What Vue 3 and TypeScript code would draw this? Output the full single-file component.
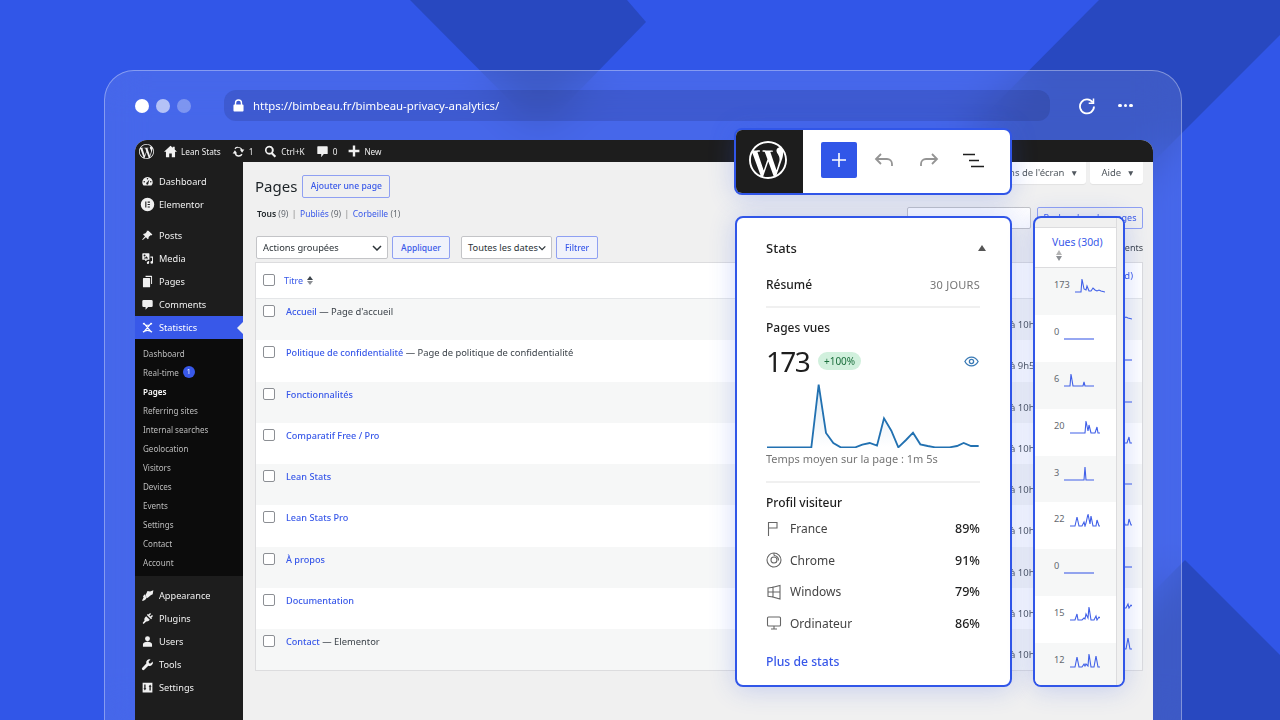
<script setup lang="ts">
interface MenuItem {
  label: string;
  d: string;
  big?: boolean;
}

const wpLogo =
  'M21.469 6.825c.84 1.537 1.318 3.3 1.318 5.175 0 3.979-2.156 7.456-5.363 9.325l3.295-9.527c.615-1.54.82-2.771.82-3.864 0-.405-.026-.78-.07-1.11m-7.981.105c.647-.03 1.232-.105 1.232-.105.582-.075.514-.93-.067-.899 0 0-1.755.135-2.88.135-1.064 0-2.85-.15-2.85-.15-.585-.03-.661.855-.075.885 0 0 .54.061 1.125.09l1.68 4.605-2.37 7.08L5.354 6.9c.649-.03 1.234-.1 1.234-.1.585-.075.516-.93-.065-.896 0 0-1.746.138-2.874.138-.2 0-.438-.008-.69-.015C4.911 3.15 8.235 1.215 12 1.215c2.809 0 5.365 1.072 7.286 2.833-.046-.003-.091-.009-.141-.009-1.06 0-1.812.923-1.812 1.914 0 .89.513 1.643 1.06 2.531.411.72.89 1.643.89 2.977 0 .915-.354 1.994-.821 3.479l-1.075 3.585-3.9-11.61.001.014zM12 22.784c-1.059 0-2.081-.153-3.048-.437l3.237-9.406 3.315 9.087c.024.053.05.101.078.149-1.12.393-2.325.609-3.582.609M1.211 12c0-1.564.336-3.05.935-4.39L7.29 21.709C3.694 19.96 1.212 16.271 1.211 12M12 0C5.385 0 0 5.385 0 12s5.385 12 12 12 12-5.385 12-12S18.615 0 12 0';

const topMenu: MenuItem[] = [
  { label: 'Dashboard', d: 'M10 3a8 8 0 0 0-8 8c0 2 .7 3.7 2 5h12c1.3-1.3 2-3 2-5a8 8 0 0 0-8-8zm0 1.5a1.2 1.2 0 1 1 0 2.4 1.2 1.2 0 0 1 0-2.4zM5 11.5a1.2 1.2 0 1 1 0-2.4 1.2 1.2 0 0 1 0 2.4zm10 0a1.2 1.2 0 1 1 0-2.4 1.2 1.2 0 0 1 0 2.4zM10 15a2 2 0 0 1-.6-3.9L13 7l-1.6 5.4A2 2 0 0 1 10 15z' },
  { label: 'Elementor', big: true, d: 'M10 1a9 9 0 1 0 0 18 9 9 0 0 0 0-18zM7 6h1.5v8H7V6zm3.2 0h3v1.5h-3V6zm0 3.2h3v1.5h-3V9.2zm0 3.3h3V14h-3v-1.5z' },
];
const contentMenu: MenuItem[] = [
  { label: 'Posts', d: 'M11.4 2.5l6.1 6.1-1.5 1.4c-.7-.4-1.5-.3-2.1.2l-1.8 1.8c-.6.6-.7 1.5-.2 2.2l-1.4 1.4-3-3-4.8 4.4-.9-.9 4.4-4.8-3-3 1.4-1.4c.7.4 1.6.3 2.2-.3l1.8-1.8c.5-.6.6-1.4.2-2.1z' },
  { label: 'Media', d: 'M3 2h9a1 1 0 0 1 1 1v8a1 1 0 0 1-1 1H8.5v2h-2v-2H3a1 1 0 0 1-1-1V3a1 1 0 0 1 1-1zm2.5 2a1.5 1.5 0 1 0 0 3 1.5 1.5 0 0 0 0-3zM4 10h7L8.5 6.5 7 8.5 6 8zM18.5 7v9a2 2 0 1 1-1.5-1.9V9h-2.500V7zM12.5 14v2.5a1.8 1.8 0 1 1-1.5-1.7V14z' },
  { label: 'Pages', d: 'M7 1h9a1 1 0 0 1 1 1v12h-1.5V3H7V1zM4 4.5h9a1 1 0 0 1 1 1V18a1 1 0 0 1-1 1H4a1 1 0 0 1-1-1V5.5a1 1 0 0 1 1-1z' },
  { label: 'Comments', d: 'M4 3h12a2 2 0 0 1 2 2v7a2 2 0 0 1-2 2h-5l-4 4v-4H4a2 2 0 0 1-2-2V5a2 2 0 0 1 2-2z' },
];
const bottomMenu: MenuItem[] = [
  { label: 'Appearance', d: 'M10 3l4 1 5-2-1 6-3 1.5L10 14 6.5 10.5zM6 8l-3 3 1 1.5L1.500 18c2.500 0 5.500-1 6.500-3.500l1-1.500z' },
  { label: 'Plugins', d: 'M14 1.5L15.5 3 13 5.500 14.500 7 17 4.500 18.500 6 16 8.500l1 1-1.500 1.500-6.500-6.500L10.500 3l1 1zM8 6.500l5.500 5.500c-1.500 2-3.500 3-5.500 2.500l-4 4L2.500 17l3-4C4.500 11 5.500 8 8 6.500z' },
  { label: 'Users', d: 'M10 2a3.8 3.8 0 1 1 0 7.6A3.8 3.8 0 0 1 10 2zM3 18v-3.5c0-2.5 3-4 7-4s7 1.5 7 4V18z' },
  { label: 'Tools', d: 'M18 5.5l-3.200 3-2.500-.6-.6-2.500 3-3.200a5 5 0 0 0-6.500 6.300L2 15a2.100 2.100 0 0 0 3 3l6.200-6.200A5 5 0 0 0 18 5.500z' },
  { label: 'Settings', d: 'M2.500 2.500h15v15h-15zM5 5.500v5.500H3.800L6 14.500 8.200 11H7V5.500zM13 14.500V9h-1.200L14 5.500 16.200 9H15v5.500z' },
];

const subMenu = [
  'Dashboard', 'Real-time', 'Pages', 'Referring sites', 'Internal searches', 'Geolocation',
  'Visitors', 'Devices', 'Events', 'Settings', 'Contact', 'Account',
];

const flat = '0,14 30,14';

interface PageRow {
  title: string;
  note?: string;
  time: string;
  views: number;
  spark: string;
}

const rows: PageRow[] = [
  { title: 'Accueil', note: "Page d'accueil", time: '10h', views: 173, spark: '0,14 6,14 7,1 9,11 11,12 12,8 14,13 16,13 18,10 20,12 22,13 24,12 26,13 30,14' },
  { title: 'Politique de confidentialité', note: 'Page de politique de confidentialité', time: '9h5', views: 0, spark: flat },
  { title: 'Fonctionnalités', time: '10h', views: 6, spark: '0,14 6,14 7,2 9,14 19,14 20,10 21,14 30,14' },
  { title: 'Comparatif Free / Pro', time: '10h', views: 20, spark: '0,14 15,14 16,2 18,12 19,6 21,14 25,14 27,8 28,14 30,14' },
  { title: 'Lean Stats', time: '10h', views: 3, spark: '0,14 20,14 21,1 22,14 30,14' },
  { title: 'Lean Stats Pro', time: '10h', views: 22, spark: '0,14 5,14 7,5 9,14 12,14 14,10 15,14 16,11 18,2 20,12 21,4 23,14 26,14 27,8 29,14 30,14' },
  { title: 'À propos', time: '10h', views: 0, spark: flat },
  { title: 'Documentation', time: '10h', views: 15, spark: '0,14 5,14 7,8 8,14 12,14 14,12 15,13 16,8 18,12 19,1 21,14 24,14 26,10 27,14 29,11 30,12' },
  { title: 'Contact', note: 'Elementor', time: '10h', views: 12, spark: '0,14 5,14 7,4 9,14 12,14 14,11 15,13 16,11 18,13 19,1 21,14 24,14 26,3 28,14 30,14' },
];

// Pixel samples of the views chart, 7.33px apart once drawn
const chartPoints =
  '110,710 243,710 265,522 287,667 309,697 331,710 375,710 396,702 418,697 440,705 461,623 483,660 504,710 527,688 548,666 570,701 592,706 614,710 658,710 680,706 700,697 722,706 745,706';
const chartArea = `110,710 ${chartPoints} 745,710`;

const profile = [
  { label: 'France', value: '89%', icon: 'flag' },
  { label: 'Chrome', value: '91%', icon: 'chrome' },
  { label: 'Windows', value: '79%', icon: 'windows' },
  { label: 'Ordinateur', value: '86%', icon: 'monitor' },
];
</script>

<template>
  <div class="page">
    <svg class="bg-shapes" width="1280" height="720" viewBox="0 0 1280 720">
      <polygon points="410,0 627,0 646,22 540,131" />
      <polygon points="1099,0 1280,0 1280,35 1067,248 960,140" />
      <polygon points="1185,560 1280,655 1280,720 1025,720" />
    </svg>

    <div class="browser">
      <div class="browser-bar">
        <div class="dots">
          <span class="dot"></span>
          <span class="dot dot-mid"></span>
          <span class="dot dot-low"></span>
        </div>
        <div class="url">
          <svg width="11" height="13" viewBox="0 0 12 14" fill="#fff">
            <path d="M2 6V4.2a4 4 0 0 1 8 0V6h.5a1 1 0 0 1 1 1v5.5a1 1 0 0 1-1 1h-9a1 1 0 0 1-1-1V7a1 1 0 0 1 1-1zm1.5 0h5V4.2a2.5 2.5 0 0 0-5 0z" />
          </svg>
          <span>https://bimbeau.fr/bimbeau-privacy-analytics/</span>
        </div>
        <svg class="reload" width="18" height="18" viewBox="0 0 18 18" fill="none" stroke="#fff" stroke-width="1.8">
          <path d="M14.8 5.5A7 7 0 1 0 16 9.5" />
          <path d="M15.5 1.5v4.8h-4.8" stroke-width="1.5" />
        </svg>
        <div class="more"><i></i><i></i><i></i></div>
      </div>

      <div class="screen">
        <div class="wp-topbar">
          <svg class="wp-mark" width="15" height="15" viewBox="0 0 24 24"><path :d="wpLogo" /></svg>
          <span class="tb-item">
            <svg width="13" height="13" viewBox="0 0 20 20"><path d="M10 1L0 10.5h3V19h5v-6h4v6h5v-8.5h3L16.5 7V2.5h-3v1.700z" /></svg>
            Lean Stats
          </span>
          <span class="tb-item">
            <svg width="13" height="13" viewBox="0 0 20 20"><path d="M10 3a7 7 0 0 1 6.3 4H19l-3.500 5L12 7h2a5 5 0 0 0-8.600-.5L3.800 5A7 7 0 0 1 10 3zM4.500 8L8 13H6a5 5 0 0 0 8.600.5L16.200 15A7 7 0 0 1 3.700 13H1z" /></svg>
            1
          </span>
          <span class="tb-item">
            <svg width="13" height="13" viewBox="0 0 20 20"><path d="M8 1a7 7 0 0 1 5.700 11l5 5-2.400 2.400-5-5A7 7 0 1 1 8 1zm0 3a4 4 0 1 0 0 8 4 4 0 0 0 0-8z" fill-rule="evenodd" /></svg>
            Ctrl+K
          </span>
          <span class="tb-item">
            <svg width="13" height="13" viewBox="0 0 20 20"><path d="M3 2h14a1 1 0 0 1 1 1v10a1 1 0 0 1-1 1h-5l-4 5v-5H3a1 1 0 0 1-1-1V3a1 1 0 0 1 1-1z" /></svg>
            0
          </span>
          <span class="tb-item">
            <svg width="12" height="12" viewBox="0 0 20 20"><path d="M8 1h4v7h7v4h-7v7H8v-7H1V8h7z" /></svg>
            New
          </span>
        </div>

        <div class="wp-body">
          <aside class="sidebar">
            <ul class="menu menu-first">
              <li v-for="item in topMenu" :key="item.label">
                <svg :class="{ big: item.big }" viewBox="0 0 20 20"><path :d="item.d" fill-rule="evenodd" /></svg>
                {{ item.label }}
              </li>
            </ul>
            <ul class="menu menu-content">
              <li v-for="item in contentMenu" :key="item.label">
                <svg viewBox="0 0 20 20"><path :d="item.d" fill-rule="evenodd" /></svg>
                {{ item.label }}
              </li>
              <li class="current">
                <svg viewBox="0 0 20 20" fill="none" stroke="#fff" stroke-width="1.8">
                  <path d="M3 4q7 5 14 0M3 17q7-5 14 0M4 3l12 14M16 3L4 17" />
                </svg>
                Statistics
              </li>
            </ul>
            <ul class="submenu">
              <li v-for="label in subMenu" :key="label" :class="{ active: label === 'Pages' }">
                {{ label }}
                <span v-if="label === 'Real-time'" class="count">1</span>
              </li>
            </ul>
            <ul class="menu menu-last">
              <li v-for="item in bottomMenu" :key="item.label">
                <svg viewBox="0 0 20 20"><path :d="item.d" fill-rule="evenodd" /></svg>
                {{ item.label }}
              </li>
            </ul>
          </aside>

          <main class="content">
            <div class="screen-meta">
              <span class="meta-btn">Options de l'écran <b>▼</b></span>
              <span class="meta-btn">Aide <b>▼</b></span>
            </div>

            <div class="title-row">
              <h1>Pages</h1>
              <span class="btn btn-add">Ajouter une page</span>
            </div>

            <div class="filter-row">
              <div class="subsub">
                <b>Tous</b> <em>(9)</em><i>|</i><a>Publiés</a> <em>(9)</em><i>|</i><a>Corbeille</a> <em>(1)</em>
              </div>
              <div class="search">
                <span class="search-input"></span>
                <span class="btn btn-search">Rechercher des pages</span>
              </div>
            </div>

            <div class="nav-row">
              <span class="select select-bulk">Actions groupées
                <svg width="10" height="6" viewBox="0 0 10 6" fill="none" stroke="#2c3338" stroke-width="1.5"><path d="M1 1l4 4 4-4" /></svg>
              </span>
              <span class="btn btn-action">Appliquer</span>
              <span class="select select-date">Toutes les dates
                <svg width="10" height="6" viewBox="0 0 10 6" fill="none" stroke="#2c3338" stroke-width="1.5"><path d="M1 1l4 4 4-4" /></svg>
              </span>
              <span class="btn btn-filter">Filtrer</span>
              <span class="item-count">9 éléments</span>
            </div>

            <div class="table">
              <div class="thead">
                <span class="check"></span>
                <a class="th-title">Titre</a>
                <span class="sort"><i class="up"></i><i class="down"></i></span>
                <span class="th-views">Vues (30d)</span>
              </div>
              <div v-for="row in rows" :key="row.title" class="tr">
                <span class="check"></span>
                <div class="td-title">
                  <a>{{ row.title }}</a><template v-if="row.note"> — {{ row.note }}</template>
                </div>
                <div class="td-date">à {{ row.time }}</div>
                <div class="td-views">
                  <svg width="30" height="15" viewBox="0 0 30 15" fill="none"><polyline :points="row.spark" /></svg>
                </div>
              </div>
            </div>
          </main>
        </div>
      </div>

      <!-- floating cards above the admin screen -->
      <div class="toolbar-card">
        <div class="toolbar-logo">
          <svg width="38" height="38" viewBox="0 0 24 24" fill="#fff"><path :d="wpLogo" /></svg>
        </div>
        <div class="toolbar-tools">
          <span class="add-btn">
            <svg width="14" height="14" viewBox="0 0 14 14" stroke="#fff" stroke-width="1.6"><path d="M7 0v14M0 7h14" /></svg>
          </span>
          <svg class="undo" width="20" height="16" viewBox="0 0 20 16" fill="none" stroke="#949494" stroke-width="1.8">
            <path d="M7 2L2 7l5 5M2 7h11a5 5 0 0 1 5 5v2" />
          </svg>
          <svg class="redo" width="20" height="16" viewBox="0 0 20 16" fill="none" stroke="#949494" stroke-width="1.8">
            <path d="M13 2l5 5-5 5M18 7H7a5 5 0 0 0-5 5v2" />
          </svg>
          <svg class="list-view" width="21" height="15" viewBox="0 0 21 15" stroke="#1e1e1e" stroke-width="1.7">
            <path d="M0 1.5h12M6 7.5h10M8 13.5h13" />
          </svg>
        </div>
      </div>

      <div class="stats-card">
        <div class="stats-head">
          <span>Stats</span>
          <i class="caret"></i>
        </div>
        <div class="stats-summary">
          <b>Résumé</b>
          <span>30 JOURS</span>
        </div>
        <section class="stats-views">
          <h3>Pages vues</h3>
          <div class="big-row">
            <span class="big-num">173</span>
            <span class="badge">+100%</span>
            <svg class="eye" width="15" height="11" viewBox="0 0 16 12" fill="none" stroke="#3a7ab5" stroke-width="1.4">
              <path d="M.8 6C2.5 2.8 5 1.2 8 1.2S13.5 2.8 15.2 6C13.5 9.2 11 10.8 8 10.8S2.5 9.2.8 6z" />
              <circle cx="8" cy="6" r="2.3" />
            </svg>
          </div>
          <svg class="chart" width="214" height="66" viewBox="107 514 642 198">
            <defs>
              <linearGradient id="chartFill" x1="0" y1="0" x2="0" y2="1">
                <stop offset="0" stop-color="#2271b1" stop-opacity=".16" />
                <stop offset="1" stop-color="#2271b1" stop-opacity="0" />
              </linearGradient>
            </defs>
            <polygon :points="chartArea" fill="url(#chartFill)" />
            <polyline :points="chartPoints" fill="none" stroke="#2271b1" stroke-width="5.5" />
          </svg>
          <p class="avg">Temps moyen sur la page : 1m 5s</p>
        </section>
        <section class="stats-profile">
          <h3>Profil visiteur</h3>
          <div v-for="item in profile" :key="item.label" class="profile-row">
            <svg width="16" height="16" viewBox="0 0 16 16" fill="none" stroke="#666" stroke-width="1.1">
              <path v-if="item.icon === 'flag'" d="M2.5 15V1.5H11V7H2.5" />
              <g v-else-if="item.icon === 'chrome'">
                <circle cx="8" cy="8" r="7" />
                <circle cx="8" cy="8" r="3" />
                <path d="M8 3.5c3 0 4.800 2.500 4.500 5" />
                <path d="M8 1v2.500" />
              </g>
              <g v-else-if="item.icon === 'windows'">
                <path d="M2 4l5-.8v4.800H2zM2 8h5v5l-5-.8zM7 3.200L14 1.500V15L7 13z" />
                <path d="M7 8h7" />
              </g>
              <g v-else>
                <rect x="1.5" y="2" width="13" height="9" rx="1" />
                <path d="M8 11v2.500M5 14h6" />
              </g>
            </svg>
            <span class="profile-label">{{ item.label }}</span>
            <b>{{ item.value }}</b>
          </div>
        </section>
        <a class="more-stats">Plus de stats</a>
      </div>

      <div class="views-card">
        <div class="views-column">
          <div class="views-head">
            <a>Vues (30d)</a>
            <span class="sort sort-big"><i class="up"></i><i class="down"></i></span>
          </div>
          <div v-for="row in rows" :key="row.title" class="views-row">
            <span>{{ row.views }}</span>
            <svg width="30" height="15" viewBox="0 0 30 15" fill="none"><polyline :points="row.spark" /></svg>
          </div>
        </div>
        <div class="views-gutter"></div>
      </div>
    </div>
  </div>
</template>

<style>
html,
body {
  margin: 0;
  background: #3156e8;
}
</style>

<style scoped>
.page {
  position: relative;
  width: 1280px;
  height: 720px;
  overflow: hidden;
  background: #3156e8;
  font-family: "Noto Sans", "Open Sans", sans-serif;
  color: #2c3338;
}

.bg-shapes {
  position: absolute;
  left: 0;
  top: 0;
  fill: #2848c0;
}

.browser {
  position: absolute;
  left: 104px;
  top: 70px;
  width: 1078px;
  height: 680px;
  box-sizing: border-box;
  padding: 19px 28px 0 30px;
  border: 1px solid rgba(255, 255, 255, 0.35);
  border-radius: 30px;
  background: rgba(255, 255, 255, 0.1);
  backdrop-filter: blur(22px);
}

.browser-bar {
  display: flex;
  align-items: center;
  height: 31px;
  margin-bottom: 19px;
}

.dots {
  display: flex;
  gap: 7px;
  width: 89px;
}

.dot {
  width: 14px;
  height: 14px;
  border-radius: 50%;
  background: #fff;
}

.dot-mid {
  background: rgba(255, 255, 255, 0.6);
}

.dot-low {
  background: rgba(255, 255, 255, 0.3);
}

.url {
  display: flex;
  align-items: center;
  gap: 9px;
  width: 826px;
  height: 31px;
  box-sizing: border-box;
  padding-left: 9px;
  border-radius: 12px;
  background: rgba(25, 35, 90, 0.18);
  color: #fff;
  font-size: 11.4px;
}

.reload {
  margin-left: 28px;
}

.more {
  display: flex;
  gap: 2px;
  margin-left: 22px;
}

.more i {
  width: 3.5px;
  height: 3.5px;
  border-radius: 50%;
  background: #fff;
}

.screen {
  width: 1018px;
  height: 600px;
  overflow: hidden;
  border-radius: 12px 12px 0 0;
  background: #f0f0f0;
}

.wp-topbar {
  display: flex;
  align-items: center;
  height: 22px;
  padding-left: 4px;
  background: #1d1d1d;
  color: #eee;
  font-size: 8.2px;
}

.wp-topbar svg {
  fill: #f0f0f0;
  flex: none;
}

.wp-mark {
  margin-right: 10px;
}

.tb-item {
  display: flex;
  align-items: center;
  gap: 4px;
  margin-right: 11px;
}

.wp-body {
  display: flex;
  height: 578px;
}

.sidebar {
  flex: none;
  width: 108px;
  background: #1d1d1d;
  color: #f0f0f0;
}

.sidebar ul {
  margin: 0;
  padding: 0;
  list-style: none;
}

.menu li {
  display: flex;
  align-items: center;
  gap: 5px;
  height: 23px;
  padding-left: 6px;
  font-size: 9.2px;
}

.menu svg {
  flex: none;
  width: 13px;
  height: 13px;
  fill: #f0f0f0;
}

.menu svg.big {
  width: 15px;
  height: 15px;
  margin-left: -1px;
  margin-right: -1px;
}

.menu-first {
  padding-top: 8px !important;
}

.menu-content {
  padding-top: 8px !important;
}

.menu li.current {
  position: relative;
  background: #3858e9;
  color: #fff;
}

.menu li.current svg {
  fill: none;
}

.menu li.current::after {
  content: "";
  position: absolute;
  right: 0;
  top: 6px;
  border: 6px solid transparent;
  border-left: 0;
  border-right-color: #f0f0f0;
}

.submenu {
  padding: 4.5px 0 !important;
  background: #0c0c0c;
  color: #bdbdbd;
  font-size: 8.05px;
}

.submenu li {
  display: flex;
  align-items: center;
  gap: 4px;
  height: 19px;
  padding-left: 8px;
}

.submenu li.active {
  color: #fff;
  font-weight: 600;
}

.count {
  display: inline-block;
  width: 12px;
  height: 12px;
  border-radius: 50%;
  background: #3858e9;
  color: #fff;
  font-size: 7px;
  line-height: 12px;
  text-align: center;
}

.menu-last {
  padding-top: 8px !important;
}

.content {
  flex: 1;
  min-width: 0;
  padding: 0 10px 0 12px;
  font-size: 9.5px;
}

.screen-meta {
  float: right;
  display: flex;
  gap: 4px;
}

.meta-btn {
  display: block;
  height: 22px;
  padding: 0 8px 0 11px;
  background: #fff;
  border-radius: 0 0 3px 3px;
  box-shadow: 0 1px 1px rgba(0, 0, 0, 0.06);
  font-size: 9.5px;
  line-height: 21px;
  color: #50575e;
}

.meta-btn b {
  margin-left: 3px;
  font-size: 8.5px;
  font-weight: 400;
}

.title-row {
  display: flex;
  align-items: center;
  gap: 5px;
  height: 23px;
  padding-top: 13px;
}

h1 {
  margin: -2px 0 0;
  font-size: 15px;
  font-weight: 400;
  color: #1d2327;
}

.btn {
  display: block;
  box-sizing: border-box;
  border: 1px solid #8fa0f2;
  border-radius: 2px;
  color: #3858e9;
  font-size: 9px;
  text-align: center;
  white-space: nowrap;
}

.btn-add {
  width: 88px;
  height: 23px;
  font-size: 8.6px;
  line-height: 21px;
  font-weight: 500;
}

.filter-row {
  display: flex;
  justify-content: space-between;
  height: 22px;
  margin-top: 9px;
}

.subsub {
  margin-left: 2px;
  font-size: 8.5px;
  line-height: 14px;
  color: #646970;
}

.subsub b {
  color: #1d2327;
  font-weight: 600;
}

.subsub em {
  font-style: normal;
}

.subsub i {
  margin: 0 3.5px;
  font-style: normal;
  color: #888;
}

.subsub a {
  color: #3858e9;
}

.search {
  display: flex;
  gap: 6px;
}

.search-input {
  width: 124px;
  box-sizing: border-box;
  border: 1px solid #c3c4c7;
  border-radius: 2px;
  background: #fff;
}

.btn-search {
  width: 106px;
  line-height: 20px;
}

.nav-row {
  display: flex;
  align-items: center;
  height: 23px;
  margin-top: 7px;
  margin-left: 1px;
}

.select {
  display: flex;
  align-items: center;
  justify-content: space-between;
  box-sizing: border-box;
  height: 23px;
  padding: 0 5px 0 6px;
  border: 1px solid #c3c4c7;
  border-radius: 2px;
  background: #fff;
  color: #2c3338;
  font-size: 9.3px;
  white-space: nowrap;
}

.select-bulk {
  width: 132px;
}

.select-date {
  width: 91px;
  margin-left: 11px;
}

.btn-action,
.btn-filter {
  height: 23px;
  margin-left: 4px;
  background: #f0f2fb;
  line-height: 21px;
  font-weight: 500;
  font-size: 8.5px;
}

.btn-action {
  width: 58px;
}

.btn-filter {
  width: 42px;
}

.item-count {
  margin-left: auto;
  font-size: 9px;
  color: #3c434a;
}

.table {
  margin-top: 3px;
  border: 1px solid #dcdcde;
  background: #fff;
}

.thead,
.tr {
  display: flex;
  padding-left: 7px;
}

.thead {
  align-items: center;
  height: 36px;
  box-sizing: border-box;
  padding-bottom: 1px;
  border-bottom: 1px solid #e4e6e8;
}

.tr {
  height: 41.25px;
  box-sizing: border-box;
  padding-top: 6px;
}

.tr:nth-child(even) {
  background: #f6f7f7;
}

.check {
  flex: none;
  width: 12px;
  height: 12px;
  box-sizing: border-box;
  border: 1px solid #8c8f94;
  border-radius: 2px;
  background: #fff;
}

.th-title {
  margin-left: 9px;
  color: #3858e9;
  font-size: 9px;
}

.sort {
  display: flex;
  flex-direction: column;
  gap: 1px;
  margin-left: 4px;
}

.sort i {
  display: block;
  border-left: 3px solid transparent;
  border-right: 3px solid transparent;
}

.sort .up {
  border-bottom: 4px solid #3c434a;
}

.sort .down {
  border-top: 4px solid #8c8f94;
}

.th-views {
  margin-left: auto;
  padding: 0 9px 9px 0;
  color: #3858e9;
  font-size: 9.5px;
}

.td-title {
  flex: 1;
  margin-left: 11px;
  line-height: 14px;
  font-size: 9.4px;
  color: #3c434a;
}

.td-title a {
  color: #3858e9;
  font-size: 9.15px;
  font-weight: 500;
}

.td-date {
  flex: none;
  width: 122px;
  padding-top: 13px;
  line-height: 13px;
  font-size: 9.5px;
  color: #50575e;
  white-space: nowrap;
}

.td-views {
  flex: none;
  width: 40px;
  box-sizing: border-box;
  margin-left: -30px;
}

.td-views polyline,
.views-row polyline {
  stroke: #4060e8;
  stroke-width: 1.1;
}

.toolbar-card,
.stats-card,
.views-card {
  position: absolute;
  box-sizing: border-box;
  overflow: hidden;
  border: 2px solid #3156e8;
  border-radius: 8px;
  box-shadow: 0 2px 26px rgba(49, 86, 232, 0.24);
}

.toolbar-card {
  left: 629px;
  top: 57px;
  display: flex;
  width: 278px;
  height: 67px;
  background: #fff;
}

.toolbar-logo {
  display: flex;
  flex: none;
  align-items: center;
  justify-content: center;
  box-sizing: border-box;
  width: 67px;
  padding: 0 3px 3px 0;
  background: #1d1d1d;
}

.toolbar-tools {
  display: flex;
  align-items: center;
  padding: 0 0 3px 18px;
}

.add-btn {
  display: flex;
  align-items: center;
  justify-content: center;
  width: 36px;
  height: 36px;
  border-radius: 2px;
  background: #3156e8;
}

.undo {
  margin-left: 17px;
}

.redo {
  margin-left: 25px;
}

.list-view {
  margin-left: 24px;
}

.stats-card {
  left: 630px;
  top: 145px;
  width: 277px;
  height: 471px;
  padding: 0 30px 0 29px;
  background: #fff;
  color: #1e1e1e;
}

.stats-head {
  display: flex;
  align-items: center;
  justify-content: space-between;
  height: 20px;
  margin-top: 20px;
  font-size: 13px;
  font-weight: 500;
}

.caret {
  border-left: 4px solid transparent;
  border-right: 4px solid transparent;
  border-bottom: 6px solid #555;
  margin-right: -6px;
}

.stats-summary {
  display: flex;
  align-items: center;
  justify-content: space-between;
  height: 20px;
  margin-top: 16px;
  padding-bottom: 12px;
  border-bottom: 2px solid #f0f0f0;
  font-size: 12px;
}

.stats-summary b {
  font-weight: 500;
}

.stats-summary span {
  color: #757575;
  font-size: 11px;
  letter-spacing: 0.25px;
}

h3 {
  margin: 0;
  font-size: 12px;
  font-weight: 500;
  line-height: 18px;
}

.stats-views {
  padding-top: 11px;
  padding-bottom: 14px;
  border-bottom: 2px solid #f0f0f0;
}

.big-row {
  display: flex;
  align-items: center;
  height: 38px;
  margin-top: 5px;
}

.big-num {
  font-size: 28px;
  line-height: 38px;
  letter-spacing: -1.7px;
  color: #1e1e1e;
}

.badge {
  margin-left: 9px;
  padding: 0 6px;
  height: 18px;
  border-radius: 9px;
  background: #d1f0dd;
  color: #1a6e3c;
  font-size: 10px;
  line-height: 18px;
}

.eye {
  margin: 0 1px 0 auto;
}

.chart {
  display: block;
  margin: 2px 0 0 0;
}

.avg {
  margin: 3px 0 0;
  color: #757575;
  font-size: 11px;
  line-height: 16px;
}

.stats-profile {
  padding-top: 11px;
}

.stats-profile h3 {
  margin-bottom: 1px;
}

.profile-row {
  display: flex;
  align-items: center;
  height: 31.5px;
  font-size: 12px;
}

.profile-row svg {
  flex: none;
}

.profile-label {
  flex: 1;
  margin-left: 8px;
  color: #444;
}

.profile-row b {
  font-size: 12.5px;
  font-weight: 500;
}

.more-stats {
  display: block;
  margin-top: 14px;
  color: #3858e9;
  font-size: 12.2px;
  font-weight: 500;
}

.views-card {
  left: 928px;
  top: 145px;
  display: flex;
  width: 92px;
  height: 471px;
  background: #f0f0f0;
}

.views-column {
  flex: none;
  width: 81px;
  margin-top: 9px;
  border-top: 1px solid #dcdcde;
  background: #fff;
}

.views-gutter {
  flex: 1;
  border-left: 1px solid #dcdcde;
  background: #f0f0f0;
}

.views-head {
  display: flex;
  flex-direction: column;
  align-items: flex-start;
  height: 40px;
  box-sizing: border-box;
  padding: 7px 0 0 17px;
  border-bottom: 1px solid #dcdcde;
  color: #3858e9;
  font-size: 10.4px;
}

.sort-big {
  margin: 1px 0 0 4px;
}

.sort-big i {
  border-left-width: 3.5px;
  border-right-width: 3.5px;
}

.sort-big .up {
  border-bottom: 5px solid #b5b5b5;
}

.sort-big .down {
  border-top: 5px solid #8c8f94;
}

.views-row {
  display: flex;
  gap: 5px;
  height: 46.9px;
  box-sizing: border-box;
  padding: 10px 0 0 19px;
  color: #646970;
  font-size: 9.2px;
}

.views-row:nth-child(even) {
  background: #f6f7f7;
}

.views-row span {
  line-height: 14px;
}
</style>
